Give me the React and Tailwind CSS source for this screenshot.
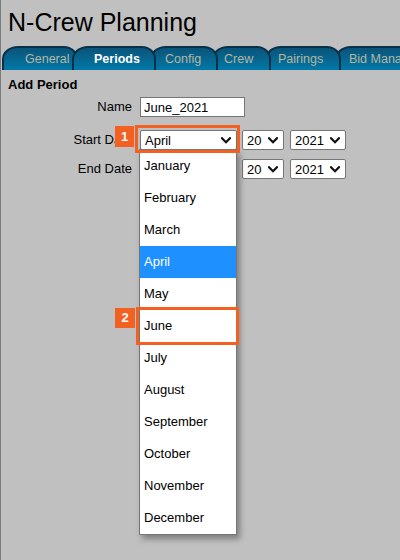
import React from "react";

const Chevron = () => (
  <svg width="10" height="7" viewBox="0 0 10 7" className="shrink-0">
    <path d="M1 1.2 L5 5.2 L9 1.2" fill="none" stroke="#111" strokeWidth="2.2" strokeLinecap="square" />
  </svg>
);

const Select = ({ value, w }) => (
  <div className={`h-[20px] ${w} bg-white border border-[#767676] rounded-[2px] flex items-center justify-between pl-[4px] pr-[5px] text-[13px] leading-none text-black`}>
    <span>{value}</span>
    <Chevron />
  </div>
);

const tabs = [
  { label: "General", w: "w-[76px]", pl: "pl-[21px]", z: "z-[6]" },
  { label: "Periods", w: "w-[84px]", pl: "pl-[20px]", z: "z-[10]", active: true },
  { label: "Config", w: "w-[68px]", pl: "pl-[13px]", z: "z-[5]" },
  { label: "Crew", w: "w-[59px]", pl: "pl-[10px]", z: "z-[4]" },
  { label: "Pairings", w: "w-[76px]", pl: "pl-[11px]", z: "z-[3]" },
  { label: "Bid Management", w: "w-[130px]", pl: "pl-[12px]", z: "z-[2]" },
];

const months = [
  "January", "February", "March", "April", "May", "June",
  "July", "August", "September", "October", "November", "December",
];

export default function App() {
  return (
    <div
      className="relative w-[400px] h-[560px] overflow-hidden bg-[#c0c0c0] border-l border-[#7b7b7b] text-black"
      style={{ fontFamily: '"Liberation Sans", Arial, sans-serif' }}
    >
      <div className="pt-[8px] pl-[7px] text-[25px] leading-[28px]">N-Crew Planning</div>

      <div className="mt-[10px] flex pl-[1px] h-[24px] overflow-hidden">
        {tabs.map((t, i) => (
          <div
            key={t.label}
            className={`relative ${t.z} ${t.w} ${t.pl} ${i > 0 ? "-ml-[6px]" : ""} shrink-0 h-[24px] flex items-center whitespace-nowrap border-2 border-b-0 border-[#0a3048] rounded-tl-[16px_13px] rounded-tr-[14px_13px] bg-linear-to-b from-[#0a5479] to-[#0079a8] text-[12.5px] ${t.active ? "font-bold text-white" : "text-[#b5b59e]"}`}
          >
            {t.label}
          </div>
        ))}
      </div>

      <div className="pt-[7px] pl-[7px] text-[13px] leading-[15px] font-bold">Add Period</div>

      <div className="mt-[5px] flex flex-col text-[13px]">
        <div className="flex items-center">
          <div className="w-[131px] text-right">Name</div>
          <div className="ml-[8px] w-[105px] h-[20px] bg-white border border-[#767676] flex items-center pl-[3px] leading-none">June_2021</div>
        </div>
        <div className="mt-[13px] flex items-center">
          <div className="w-[131px] text-right">Start Date</div>
          <div className="ml-[8px]"><Select value="April" w="w-[97px]" /></div>
          <div className="ml-[5px]"><Select value="20" w="w-[42px]" /></div>
          <div className="ml-[6px]"><Select value="2021" w="w-[56px]" /></div>
        </div>
        <div className="mt-[9px] flex items-center">
          <div className="w-[131px] text-right">End Date</div>
          <div className="ml-[8px]"><Select value="April" w="w-[97px]" /></div>
          <div className="ml-[5px]"><Select value="20" w="w-[42px]" /></div>
          <div className="ml-[6px]"><Select value="2021" w="w-[56px]" /></div>
        </div>
      </div>

      {/* dropdown list */}
      <div className="absolute left-[138px] top-[149px] w-[98px] bg-white border border-[#767676] shadow-[3px_4px_6px_rgba(0,0,0,0.35)] z-20">
        {months.map((m) => (
          <div
            key={m}
            className={`h-[32px] flex items-center pl-[4px] text-[13px] ${m === "April" ? "bg-[#1e90ff] text-white" : "text-black"}`}
          >
            {m}
          </div>
        ))}
      </div>

      {/* annotation boxes */}
      <div className="absolute left-[134px] top-[125px] w-[105px] h-[28px] border-[3px] border-[#f26122] z-30" />
      <div className="absolute left-[114px] top-[126px] w-[19px] h-[21px] bg-[#f26122] text-white font-bold text-[13px] flex items-center justify-center z-30">1</div>

      <div className="absolute left-[135px] top-[307px] w-[103px] h-[38px] border-[3px] border-[#f26122] z-30" />
      <div className="absolute left-[114px] top-[308px] w-[20px] h-[20px] bg-[#f26122] text-white font-bold text-[13px] flex items-center justify-center z-30">2</div>
    </div>
  );
}
